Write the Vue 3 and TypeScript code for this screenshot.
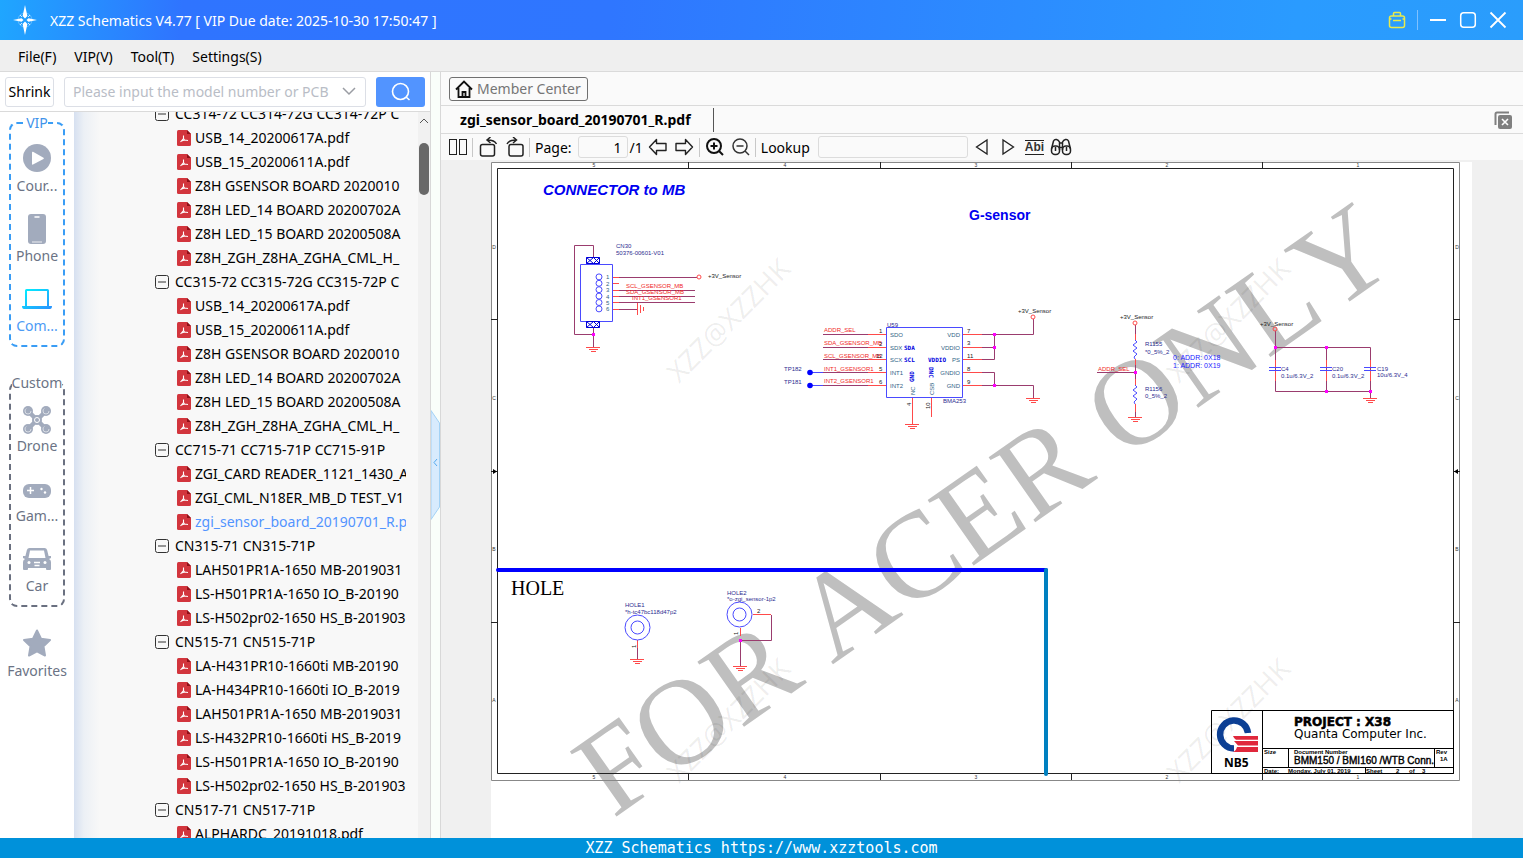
<script setup lang="ts">
import { ref } from 'vue'

interface TreeFolder {
  name: string
  files: string[]
}
interface NavItem {
  label: string
  icon: string
}
interface Label {
  x: number
  y: number
  t: string
}

const menus: string[] = ['File(F)', 'VIP(V)', 'Tool(T)', 'Settings(S)']

const acerFiles: string[] = [
  'USB_14_20200617A.pdf',
  'USB_15_20200611A.pdf',
  'Z8H GSENSOR BOARD 2020010',
  'Z8H LED_14 BOARD 20200702A',
  'Z8H LED_15 BOARD 20200508A',
  'Z8H_ZGH_Z8HA_ZGHA_CML_H_',
]
const folders: TreeFolder[] = [
  { name: 'CC314-72 CC314-72G CC314-72P C', files: acerFiles },
  { name: 'CC315-72 CC315-72G CC315-72P C', files: acerFiles },
  {
    name: 'CC715-71 CC715-71P CC715-91P',
    files: ['ZGI_CARD READER_1121_1430_A', 'ZGI_CML_N18ER_MB_D TEST_V1', 'zgi_sensor_board_20190701_R.p'],
  },
  {
    name: 'CN315-71 CN315-71P',
    files: ['LAH501PR1A-1650 MB-2019031', 'LS-H501PR1A-1650 IO_B-20190', 'LS-H502pr02-1650 HS_B-201903'],
  },
  {
    name: 'CN515-71 CN515-71P',
    files: [
      'LA-H431PR10-1660ti MB-20190',
      'LA-H434PR10-1660ti IO_B-2019',
      'LAH501PR1A-1650 MB-2019031',
      'LS-H432PR10-1660ti HS_B-2019',
      'LS-H501PR1A-1650 IO_B-20190',
      'LS-H502pr02-1650 HS_B-201903',
    ],
  },
  { name: 'CN517-71 CN517-71P', files: ['ALPHARDC_20191018.pdf'] },
]
const selected = ref<string>('zgi_sensor_board_20190701_R.p')

const vipItems: NavItem[] = [
  { label: 'Cour...', icon: 'play' },
  { label: 'Phone', icon: 'phone' },
  { label: 'Com...', icon: 'laptop' },
]
const customItems: NavItem[] = [
  { label: 'Drone', icon: 'drone' },
  { label: 'Gam...', icon: 'game' },
  { label: 'Car', icon: 'car' },
]
const page = ref<string>('1')
const lookup = ref<string>('')
const query = ref<string>('')

const columns = [5, 4, 3, 2, 1].map((n, i) => ({ n, x: 594 + i * 191 }))
const ticksX: number[] = [688, 880, 1071, 1262]
const rowsY = ['D', 'C', 'B', 'A'].map((n, i) => ({ n, y: 249 + i * 151 }))
const marks: number[][] = [[679, 384], [1179, 384], [679, 784], [1179, 784]]

const navy: Label[] = [
  { x: 616, y: 248, t: 'CN30' },
  { x: 616, y: 255, t: '50376-00601-V01' },
  { x: 887, y: 327, t: 'U59' },
  { x: 943, y: 403, t: 'BMA253' },
  { x: 784, y: 371, t: 'TP182' },
  { x: 784, y: 384, t: 'TP181' },
  { x: 1145, y: 346, t: 'R1155' },
  { x: 1145, y: 354, t: '*0_5%_2' },
  { x: 1145, y: 391, t: 'R1156' },
  { x: 1145, y: 398, t: '0_5%_2' },
  { x: 1281, y: 371, t: 'C4' },
  { x: 1281, y: 378, t: '0.1u/6.3V_2' },
  { x: 1332, y: 371, t: 'C20' },
  { x: 1332, y: 378, t: '0.1u/6.3V_2' },
  { x: 1377, y: 371, t: 'C19' },
  { x: 1377, y: 377, t: '10u/6.3V_4' },
  { x: 625, y: 607, t: 'HOLE1' },
  { x: 625, y: 614, t: '*h-tc47bc118d47p2' },
  { x: 727, y: 595, t: 'HOLE2' },
  { x: 727, y: 601, t: '*o-zgi_sensor-1p2' },
]
const red: Label[] = [
  { x: 626, y: 288, t: 'SCL_GSENSOR_MB' },
  { x: 626, y: 294, t: 'SDA_GSENSOR_MB' },
  { x: 632, y: 300, t: 'INT1_GSENSOR1' },
  { x: 824, y: 332, t: 'ADDR_SEL' },
  { x: 824, y: 345, t: 'SDA_GSENSOR_MB' },
  { x: 824, y: 358, t: 'SCL_GSENSOR_MB' },
  { x: 824, y: 371, t: 'INT1_GSENSOR1' },
  { x: 824, y: 383, t: 'INT2_GSENSOR1' },
  { x: 1098, y: 371, t: 'ADDR_SEL' },
]
const black: Label[] = [
  { x: 708, y: 278, t: '+3V_Sensor' },
  { x: 1018, y: 313, t: '+3V_Sensor' },
  { x: 1120, y: 319, t: '+3V_Sensor' },
  { x: 1260, y: 326, t: '+3V_Sensor' },
  { x: 879, y: 333, t: '1' },
  { x: 879, y: 346, t: '2' },
  { x: 876, y: 358, t: '12' },
  { x: 879, y: 371, t: '5' },
  { x: 879, y: 384, t: '6' },
  { x: 967, y: 333, t: '7' },
  { x: 967, y: 345, t: '3' },
  { x: 967, y: 358, t: '11' },
  { x: 967, y: 371, t: '8' },
  { x: 967, y: 384, t: '9' },
  { x: 757, y: 613, t: '2' },
]
const pinsLeft: Label[] = [
  { x: 890, y: 337, t: 'SDO' },
  { x: 890, y: 350, t: 'SDX' },
  { x: 890, y: 362, t: 'SCX' },
  { x: 890, y: 375, t: 'INT1' },
  { x: 890, y: 388, t: 'INT2' },
]
const pinsRight: Label[] = [
  { x: 960, y: 337, t: 'VDD' },
  { x: 960, y: 350, t: 'VDDIO' },
  { x: 960, y: 362, t: 'PS' },
  { x: 960, y: 375, t: 'GNDIO' },
  { x: 960, y: 388, t: 'GND' },
]
const grounds: number[][] = [[593, 347], [912, 424], [1033, 398], [1135, 417], [1370, 398], [637, 659], [740, 666]]
const dots: number[][] = [
  [593, 334], [994, 334], [994, 347], [994, 385], [1135, 372],
  [1275, 347], [1326, 347], [1326, 391], [1370, 391], [740, 640],
]
const capsX: number[] = [1275, 1326, 1370]
const rings: number[][] = [[699, 277], [1033, 317], [1135, 323], [1275, 329]]
</script>

<template>
  <div class="app">
    <header class="titlebar">
      <svg class="star" viewBox="0 0 26 30" width="26" height="30">
        <circle cx="13" cy="15" r="7" fill="none" stroke="#8fd0ff" stroke-width="1" opacity=".6" />
        <path d="M13 0l2.400 11L13 13.500l-2.400-2.500zM13 30l2.400-11L13 16.500l-2.400 2.500zM1 15l8.500-1.800L11.500 15l-2 1.800zM25 15l-8.500-1.800L14.500 15l2 1.800z" fill="#fff" />
        <path d="M8 10l2 2M18 10l-2 2M8 20l2-2M18 20l-2-2" stroke="#cfeaff" stroke-width="1" />
      </svg>
      <h1>XZZ Schematics V4.77 [ VIP Due date: 2025-10-30 17:50:47 ]</h1>
      <div class="window-tools">
        <button aria-label="Toolbox" class="wbtn">
          <svg viewBox="0 0 18 18" width="18" height="18" fill="none" stroke="#e8ea4c" stroke-width="1.500">
            <rect x="1.500" y="5" width="15" height="11.500" rx="2" /><path d="M5.500 5V2.500q0-1 1-1h5q1 0 1 1V5M1.500 8h2M14.500 8h2M5 9.500h8" />
          </svg>
        </button>
        <i class="divider"></i>
        <button aria-label="Minimize" class="wbtn"><svg viewBox="0 0 18 18" width="18" height="18"><path d="M1 9h16" stroke="#fff" stroke-width="2" /></svg></button>
        <button aria-label="Maximize" class="wbtn"><svg viewBox="0 0 18 18" width="18" height="18"><rect x="1.700" y="1.700" width="14.600" height="14.600" rx="3" fill="none" stroke="#fff" stroke-width="1.500" /></svg></button>
        <button aria-label="Close" class="wbtn"><svg viewBox="0 0 18 18" width="18" height="18"><path d="M1.500 1.500l15 15M16.500 1.500l-15 15" stroke="#fff" stroke-width="1.800" /></svg></button>
      </div>
    </header>

    <nav class="menubar">
      <button v-for="m in menus" :key="m">{{ m }}</button>
    </nav>

    <div class="body">
      <section class="left">
        <form class="search" @submit.prevent>
          <button type="button" class="shrink">Shrink</button>
          <div class="combo">
            <input v-model="query" aria-label="Model number" placeholder="Please input the model number or PCB" />
            <button type="button" aria-label="History">
              <svg viewBox="0 0 14 9" width="14" height="9"><path d="M1 1l6 6 6-6" fill="none" stroke="#9a9da3" stroke-width="1.500" /></svg>
            </button>
          </div>
          <button class="go" aria-label="Search">
            <svg viewBox="0 0 20 20" width="20" height="20" fill="none" stroke="#fff" stroke-width="1.600"><circle cx="9.500" cy="9.500" r="8" /><path d="M15 15l3.500 3" /></svg>
          </button>
        </form>

        <div class="browse">
          <aside class="side">
            <fieldset class="group vip">
              <legend>VIP</legend>
              <button v-for="it in vipItems" :key="it.label" class="nav" :class="{ active: it.icon === 'laptop' }">
                <svg viewBox="0 0 30 30" width="30" height="30">
                  <template v-if="it.icon === 'play'">
                    <circle cx="15" cy="15" r="14" fill="#a2abbd" /><path d="M10 9.500v11.500q0 1 1 .5l10.500-5.500q.8-.7 0-1.300L11 8.800q-1-.4-1 .7z" fill="#fff" />
                  </template>
                  <template v-else-if="it.icon === 'phone'">
                    <rect x="6" y="1" width="18" height="30" rx="3" fill="#a2abbd" /><path d="M13 4h4" stroke="#fff" stroke-width="1.500" stroke-linecap="round" /><path d="M10 29h10" stroke="#fff" stroke-width=".8" />
                  </template>
                  <template v-else>
                    <defs><linearGradient id="lap" x1="0" x2="1" y1="0" y2="1"><stop offset="0" stop-color="#00f4ff" /><stop offset="1" stop-color="#2a90ff" /></linearGradient></defs>
                    <path fill-rule="evenodd" d="M4.500 6h21q1.500 0 1.500 1.500V23h3q0 3-2 3H2q-2 0-2-3h3V7.500Q3 6 4.500 6zM5 8v15h20V8z" fill="url(#lap)" />
                  </template>
                </svg>
                <span>{{ it.label }}</span>
              </button>
            </fieldset>
            <fieldset class="group custom">
              <legend>Custom</legend>
              <button v-for="it in customItems" :key="it.label" class="nav">
                <svg viewBox="0 0 30 30" width="30" height="30">
                  <template v-if="it.icon === 'drone'">
                    <path d="M6 8l18 18M24 8L6 26" stroke="#a2abbd" stroke-width="4.500" />
                    <circle cx="15" cy="17" r="5" fill="#a2abbd" /><circle cx="15" cy="17" r="2.500" fill="none" stroke="#fff" />
                    <g v-for="p in [[6, 8], [24, 8], [6, 26], [24, 26]]" :key="p.join()">
                      <circle :cx="p[0]" :cy="p[1]" r="5" fill="#a2abbd" />
                      <circle :cx="p[0]" :cy="p[1]" r="3" fill="none" stroke="#e4e8ee" stroke-width=".8" stroke-dasharray="12 7" />
                    </g>
                  </template>
                  <template v-else-if="it.icon === 'game'">
                    <rect x="1" y="11" width="28" height="14" rx="6" fill="#a2abbd" />
                    <path d="M5 17.500h7M8.500 14v7" stroke="#fff" stroke-width="1.500" /><circle cx="19.500" cy="16" r="1.200" fill="#fff" /><circle cx="23" cy="19.500" r="1.200" fill="#fff" />
                  </template>
                  <template v-else>
                    <path fill-rule="evenodd" d="M7.500 5h15q2 0 2.600 2l1.500 6H29v2l-2 1q2 1 2 3v7q0 1-1 1h-3q-1 0-1-1v-1H6v1q0 1-1 1H2q-1 0-1-1v-7q0-2 2-3l-2-1v-2h2.400l1.500-6q.6-2 2.600-2zM8 7.500L6.500 15h17L22 7.500z" fill="#a2abbd" />
                    <path d="M12 19.500h6M12.500 22.500h5" stroke="#fff" stroke-width="1.500" /><circle cx="7" cy="19.500" r="1.500" fill="#fff" /><circle cx="23" cy="19.500" r="1.500" fill="#fff" />
                  </template>
                </svg>
                <span>{{ it.label }}</span>
              </button>
            </fieldset>
            <button class="nav favorites">
              <svg viewBox="0 0 30 30" width="30" height="30"><path d="M15 2.500l4 8.200 9 1.300-6.500 6.300L23 27.500 15 23.300 7 27.500l1.500-9.200L2 12l9-1.300z" fill="#a2abbd" stroke="#a2abbd" stroke-width="2" stroke-linejoin="round" /></svg>
              <span>Favorites</span>
            </button>
          </aside>

          <div class="tree">
            <ul>
              <li v-for="f in folders" :key="f.name">
                <button class="folder">
                  <svg viewBox="0 0 14 14" width="14" height="14" fill="none" stroke="#333"><rect x=".5" y=".5" width="13" height="13" rx="2" /><path d="M3 7h8" /></svg>
                  <span>{{ f.name }}</span>
                </button>
                <ul>
                  <li v-for="n in f.files" :key="n">
                    <button class="file" :class="{ current: n === selected }" @click="selected = n">
                      <svg viewBox="0 0 14 16" width="14" height="16">
                        <path d="M1.500 0H10l4 4v10.500q0 1.500-1.500 1.500h-11Q0 16 0 14.500v-13Q0 0 1.500 0z" fill="#d2353d" /><path d="M10 0l4 4h-4z" fill="#8f1018" />
                        <path d="M6.500 5.500v3L3.500 12M6.500 8.500l1 1.500 3.500.5M4.500 11l3-1" fill="none" stroke="#fff" stroke-width="1.100" />
                      </svg>
                      <span>{{ n }}</span>
                    </button>
                  </li>
                </ul>
              </li>
            </ul>
          </div>
          <div class="scroll">
            <svg viewBox="0 0 10 6" width="10" height="6"><path d="M1 5l4-4 4 4" fill="none" stroke="#555" /></svg>
            <i class="thumb"></i>
          </div>
        </div>
      </section>

      <div class="splitter">
        <button aria-label="Collapse panel">
          <svg viewBox="0 0 9 110" width="9" height="110"><path d="M0 .5L8.500 13v84L0 109.500z" fill="#d8ebfd" stroke="#a3d2f5" /><path d="M6 49L3 52.500 6 56" fill="none" stroke="#55aaf0" /></svg>
        </button>
      </div>

      <main class="right">
        <div class="member-row">
          <button class="member">
            <svg viewBox="0 0 18 18" width="18" height="18" fill="none" stroke="#111" stroke-width="1.800"><path d="M1 9.500L9 1.500l8 8M3.500 8v9h11V8M7.500 17v-5h3v5" /></svg>
            Member Center
          </button>
        </div>
        <div class="tabs">
          <button class="tab">zgi_sensor_board_20190701_R.pdf</button>
          <button class="close-all" aria-label="Close all tabs">
            <svg viewBox="0 0 18 18" width="18" height="18"><path d="M1.500 14V3q0-1.500 1.500-1.500h12" fill="none" stroke="#808080" stroke-width="2" /><rect x="4" y="4" width="14" height="14" rx="2" fill="#808080" /><path d="M8 8l6 6M14 8l-6 6" stroke="#fff" stroke-width="1.600" /></svg>
          </button>
        </div>
        <div class="toolbar">
          <button aria-label="Two pages"><svg viewBox="0 0 20 18" width="20" height="18" fill="none" stroke="#222"><rect x="1.500" y="1.500" width="7" height="15" /><rect x="11.500" y="1.500" width="7" height="15" /></svg></button>
          <i></i>
          <button aria-label="Rotate left"><svg viewBox="0 0 20 20" width="20" height="20" fill="none" stroke="#222" stroke-width="1.500"><rect x="2.500" y="7.500" width="14" height="11.500" rx="2" /><path d="M18.500 7q-2-4-9-4M12.500 0L9 3l3.500 3" /></svg></button>
          <button aria-label="Rotate right" class="rot"><svg viewBox="0 0 20 20" width="20" height="20" fill="none" stroke="#222" stroke-width="1.500"><rect x="4" y="7.500" width="14" height="11.500" rx="2" /><path d="M2 7q2-4 9-4M8 0l3.500 3L8 6" /></svg></button>
          <i></i>
          <label for="page">Page:</label>
          <input id="page" v-model="page" class="page" />
          <span class="total">/1</span>
          <button aria-label="Previous page"><svg viewBox="0 0 20 18" width="20" height="18" fill="none" stroke="#222" stroke-width="1.400"><path d="M1.500 9l7-7.500V5.500H18v7H8.500v4z" stroke-linejoin="round" /></svg></button>
          <button aria-label="Next page" class="next"><svg viewBox="0 0 20 18" width="20" height="18" fill="none" stroke="#222" stroke-width="1.400"><path d="M18.500 9l-7-7.500V5.500H2v7h9.500v4z" stroke-linejoin="round" /></svg></button>
          <i></i>
          <button aria-label="Zoom in"><svg viewBox="0 0 20 20" width="20" height="20" fill="none" stroke="#111" stroke-width="2"><circle cx="9" cy="9" r="7" /><path d="M14 14l4 4M5.500 9h7M9 5.500v7" /></svg></button>
          <button aria-label="Zoom out" class="out"><svg viewBox="0 0 20 20" width="20" height="20" fill="none" stroke="#333" stroke-width="1.500"><circle cx="9" cy="9" r="7" /><path d="M14 14l4 4M5.500 9h7" /></svg></button>
          <i></i>
          <label for="lookup">Lookup</label>
          <input id="lookup" v-model="lookup" class="lookup" />
          <button aria-label="Find previous"><svg viewBox="0 0 14 18" width="14" height="18" fill="none" stroke="#222" stroke-width="1.300"><path d="M12 2v14L1.500 9z" /></svg></button>
          <button aria-label="Find next" class="fnext"><svg viewBox="0 0 14 18" width="14" height="18" fill="none" stroke="#222" stroke-width="1.300"><path d="M2 2v14L12.500 9z" /></svg></button>
          <button class="abi">Abi</button>
          <button aria-label="Search document"><svg viewBox="0 0 22 18" width="22" height="18" fill="none" stroke="#222" stroke-width="1.500"><rect x="1.500" y="8" width="8" height="8.500" rx="3.500" /><rect x="12.500" y="8" width="8" height="8.500" rx="3.500" /><path d="M1.500 11L3.500 3q1-2 3-1.500T9.500 4v8M20.500 11l-2-8q-1-2-3-1.500T12.500 4v8M9 5h4M9 9.500h4M5.500 9v4M16.500 9v4" /></svg></button>
        </div>

        <div class="viewer">
          <svg class="sheet" viewBox="491 162 981 676" preserveAspectRatio="xMidYMin meet">
            <rect x="491" y="162" width="981" height="676" fill="#fff" />
            <text class="stamp" transform="translate(613 819) rotate(-35.100)">FOR ACER ONLY</text>
            <g class="marks"><text v-for="m in marks" :key="m.join()" :transform="`translate(${m[0]} ${m[1]}) rotate(-45)`">XZZ@XZZHK</text></g>

            <g fill="none" stroke="#222">
              <path d="M491.500 162.500H1459.500V780.500H491.500z" stroke="#888" />
              <path d="M497.500 168.500H1453.500V773.500H497.500z" />
              <path v-for="x in ticksX" :key="x" :d="`M${x}.500 162v6M${x}.500 774v6`" />
              <path v-for="y in [319, 622]" :key="y" :d="`M491 ${y}.500h6M1454 ${y}.500h6`" />
              <path d="M491 471.500h6M1454 471.500h6" />
            </g>
            <path d="M497 471.500l-4-2.500v5zM1454 471.500l4-2.500v5z" fill="#000" />
            <g class="coords">
              <template v-for="c in columns" :key="c.n"><text :x="c.x" y="167">{{ c.n }}</text><text :x="c.x" y="779">{{ c.n }}</text></template>
              <template v-for="r in rowsY" :key="r.n"><text x="494" :y="r.y">{{ r.n }}</text><text x="1457" :y="r.y">{{ r.n }}</text></template>
            </g>

            <text class="heading slant" x="543" y="195">CONNECTOR to MB</text>
            <text class="heading" x="969" y="220">G-sensor</text>

            <!-- Wires -->
            <g fill="none" stroke="#9a3c6e">
              <path d="M593.500 257V245.500H574.500V334.500H593.500M593.500 328V347" />
              <path d="M619 277.500H697M619 290.500H695M619 296.500H695M619 302.500H695M619 309.500H637" />
              <path d="M823 334.500H868M823 347.500H868M823 359.500H868M823 372.500H868M823 385.500H868" />
              <path d="M982 334.500H1033.500V319M982 347.500H994M982 359.500H994.500V334M982 372.500H994.500V385M982 385.500H1033.500V398" />
              <path d="M1097 372.500H1135M1135.500 325V334M1135.500 365V380M1135.500 410V417" />
              <path d="M1275.500 331V391.500H1370.500V347.500H1275M1326.500 347V391M1370.500 391V398" />
              <path d="M637.500 648V659M740.500 640V666M740 640.500H771.500V615" />
            </g>
            <g fill="none" stroke="#ff4a4a">
              <path d="M612 277.500h7M612 283.500h7M612 290.500h7M612 296.500h7M612 302.500h7M612 309.500h7" />
              <path d="M868 334.500h18M868 347.500h18M868 359.500h18M868 372.500h18M868 385.500h18M963 334.500h19M963 347.500h19M963 359.500h19M963 372.500h19M963 385.500h19" />
              <path d="M912.500 398V424M931.500 398V417M1135.500 334v6M1135.500 359v6M1135.500 379v6M1135.500 404v8" />
              <path v-for="x in capsX" :key="x" :d="`M${x}.500 360v7M${x}.500 371v10`" />
              <path d="M637.500 640v8M740.500 628v8M753 614.500h18M637.500 303v12M640.500 305v8M643.500 307v4" />
              <path v-for="g in grounds" :key="g.join()" :d="`M${g[0] - 7} ${g[1]}.500h14M${g[0] - 4} ${g[1] + 2}.500h9M${g[0] - 2} ${g[1] + 4}.500h5`" />
              <circle v-for="r in rings" :key="r.join()" :cx="r[0]" :cy="r[1]" r="2" />
            </g>

            <!-- Component outlines -->
            <g fill="none" stroke="#4a4aff">
              <path d="M580.500 264.500H612.500V321.500H580.500zM886.500 327.500H962.500V397.500H886.500z" />
              <path d="M586.500 257.500h13v6h-13zM586.500 257.500l7 6 6-6M586.500 263.500l7-6 6 6M586.500 321.500h13v6h-13zM586.500 321.500l7 6 6-6M586.500 327.500l7-6 6 6" stroke="#0000d8" />
              <circle v-for="i in 6" :key="i" cx="599" :cy="270.500 + i * 6.400" r="3" />
              <path d="M1135 340l2 2-4 3 4 3-4 3 4 3-3 3 1 2M1135 385l2 2-4 3 4 3-4 3 4 3-3 3 1 2" />
              <path v-for="x in capsX" :key="x" :d="`M${x - 6} 367.500h12M${x - 6} 370.500h12`" />
              <path d="M810 372.500h13M810 385.500h13" />
              <circle cx="637.500" cy="627.500" r="12.500" /><circle cx="637.500" cy="627.500" r="6.500" />
              <circle cx="739.500" cy="614.500" r="12.500" /><circle cx="739.500" cy="614.500" r="6.500" />
            </g>
            <circle cx="810" cy="372.500" r="2.800" fill="#00f" /><circle cx="810" cy="385.500" r="2.800" fill="#00f" />
            <rect v-for="d in dots" :key="d.join()" :x="d[0] - 1" :y="d[1] - 1" width="3" height="3" fill="#f0f" />

            <!-- Component labels -->
            <g class="tiny">
              <g fill="#2c2c90"><text v-for="l in navy" :key="l.x + l.t" :x="l.x" :y="l.y">{{ l.t }}</text></g>
              <g fill="#f02828"><text v-for="l in red" :key="l.x + l.t" :x="l.x" :y="l.y">{{ l.t }}</text></g>
              <g fill="#222"><text v-for="l in black" :key="l.x + l.t + l.y" :x="l.x" :y="l.y">{{ l.t }}</text></g>
              <g fill="#2f5f86">
                <text v-for="l in pinsLeft" :key="l.t" :x="l.x" :y="l.y">{{ l.t }}</text>
                <text v-for="l in pinsRight" :key="l.t" :x="l.x" :y="l.y" text-anchor="end">{{ l.t }}</text>
                <text v-for="i in 6" :key="i" x="606" :y="273 + i * 6.400">{{ i }}</text>
                <text transform="translate(915 395) rotate(-90)">NC</text>
                <text transform="translate(934 395) rotate(-90)">CSB</text>
              </g>
              <g fill="#222">
                <text transform="translate(911 406) rotate(-90)">4</text><text transform="translate(930 409) rotate(-90)">10</text>
                <text transform="translate(636 648) rotate(-90)">1</text><text transform="translate(738 635) rotate(-90)">1</text>
              </g>
            </g>
            <g class="alias">
              <text x="904" y="350">SDA</text><text x="904" y="362">SCL</text><text x="928" y="362">VDDIO</text>
              <text transform="translate(914 382) rotate(-90)">GND</text><text transform="translate(929 367) rotate(90)">DNC</text>
            </g>
            <g class="addr"><text x="1173" y="360">0: ADDR: 0X18</text><text x="1173" y="368">1: ADDR: 0X19</text></g>

            <path d="M498 570H1046" stroke="#00f" stroke-width="4" stroke-linecap="round" />
            <path d="M1046 570V774" stroke="#0080c0" stroke-width="4" stroke-linecap="round" />
            <text class="hole" x="511" y="595">HOLE</text>

            <!-- Title block -->
            <path d="M1211.500 710.500H1453.500V773.500H1211.500zM1262.500 710V773M1262 748.500H1453M1262 767.500H1453M1288.500 748V768M1434.500 748V768M1365.500 768V773" fill="none" stroke="#000" />
            <path d="M1248 733a14 14 0 1 0-14 15.500" fill="none" stroke="#0c3f94" stroke-width="6.500" />
            <path d="M1233 736h25v3.800h-22q-2-1-3-3.800zM1234 741h24v4.500h-20zM1233 752q3-1 4-5h21v5z" fill="#e0283c" />
            <text class="nb5" x="1224" y="767">NB5</text>
            <text class="project" x="1294" y="726">PROJECT : X38</text>
            <text class="company" x="1294" y="738">Quanta Computer Inc.</text>
            <text class="board" x="1294" y="764">BMM150 / BMI160 /WTB Conn.</text>
            <g class="block-notes">
              <text x="1264" y="754">Size</text><text x="1294" y="754">Document Number</text><text x="1436" y="754">Rev</text><text x="1440" y="761">1A</text>
              <text x="1264" y="773">Date:</text><text x="1288" y="773">Monday, July 01, 2019</text><text x="1366" y="773">Sheet</text><text x="1396" y="773">2</text><text x="1409" y="773">of</text><text x="1422" y="773">3</text>
            </g>
          </svg>
        </div>
      </main>
    </div>

    <footer class="status">XZZ Schematics https://www.xzztools.com</footer>
  </div>
</template>

<style>
body {
  margin: 0;
}
</style>

<style scoped>
.app {
  display: flex;
  flex-direction: column;
  height: 100vh;
  overflow: hidden;
  background: #fafafa;
  color: #000;
  font: 14px/20px "Noto Sans", "Open Sans", sans-serif;
}
button {
  margin: 0;
  padding: 0;
  border: 0;
  background: none;
  color: inherit;
  font: inherit;
  white-space: nowrap;
}
input {
  box-sizing: border-box;
  min-width: 0;
  font: inherit;
}
svg {
  display: block;
  flex: none;
}
.titlebar {
  display: flex;
  align-items: center;
  flex: none;
  height: 40px;
  padding: 0 16px 0 12px;
  background: linear-gradient(95deg, #1fa6ff 0, #2f74ff 12%, #2f76ff 40%, #2a9bff 85%, #2a9dfc 100%);
  color: #fff;
}
.titlebar h1 {
  flex: 1;
  margin: 0 0 0 12px;
  padding-top: 1px;
  font-size: 14px;
  font-weight: 400;
}
.window-tools {
  display: flex;
  align-items: center;
  gap: 12px;
}
.window-tools .divider {
  width: 1px;
  height: 20px;
  margin: 0 -1px;
  background: #7fc1ff;
}
.menubar {
  display: flex;
  gap: 18px;
  box-sizing: border-box;
  flex: none;
  height: 32px;
  padding: 2px 18px 0;
  border-bottom: 1px solid #dadada;
  background: #efefef;
}
.body {
  display: flex;
  flex: 1;
  min-height: 0;
}
.left {
  display: flex;
  flex-direction: column;
  flex: none;
  width: 430px;
  border-right: 1px solid #d8d8d8;
  background: #fff;
}
.search {
  display: flex;
  align-items: center;
  flex: none;
  height: 39px;
  padding: 0 5px;
  border-bottom: 1px solid #dadada;
}
.search .shrink {
  box-sizing: border-box;
  width: 49px;
  height: 30px;
  padding-top: 1px;
  border: 1px solid #dcdfe6;
  border-radius: 3px;
}
.combo {
  display: flex;
  align-items: center;
  box-sizing: border-box;
  flex: 1;
  height: 30px;
  margin: 0 10px;
  padding: 0 9px 0 8px;
  border: 1px solid #dcdfe6;
  border-radius: 3px;
}
.combo input {
  flex: 1;
  padding: 1px 0 0;
  border: 0;
  outline: 0;
  background: none;
}
.combo input::placeholder {
  color: #b9bdc6;
}
.go {
  display: grid;
  place-items: center;
  width: 49px;
  height: 30px;
  border-radius: 3px;
  background: #5294ff;
}
.browse {
  display: flex;
  flex: 1;
  min-height: 0;
}
.side {
  box-sizing: border-box;
  flex: none;
  width: 74px;
  padding: 1px 9px 0;
  background: #fff;
}
.group {
  min-width: 0;
  margin: 0 0 26px;
  padding: 10px 0 9px;
  border: 2px dashed #3a9df5;
  border-radius: 8px;
}
.group legend {
  margin: 0 auto;
  padding: 0;
  color: #3f93ea;
}
.group.custom {
  margin-bottom: 21px;
  border-color: #6a7080;
}
.group.custom legend {
  color: #6b7385;
}
.nav {
  display: flex;
  flex-direction: column;
  align-items: center;
  gap: 3px;
  width: 100%;
  color: #6b7385;
}
.nav svg {
  overflow: visible;
}
.nav + .nav {
  margin-top: 17px;
}
.nav.active {
  color: #4d9bf5;
}
.tree {
  flex: 1;
  min-width: 0;
  padding: 0 12px 0 81px;
  overflow: hidden;
  background: linear-gradient(90deg, #d6e0f0 0, #ecf0f5 10px, #f8f8f8 26px);
}
.tree ul {
  margin: 0;
  padding: 0;
  list-style: none;
}
.tree > ul {
  margin-top: -10px;
}
.tree li ul {
  padding-left: 22px;
}
.folder,
.file {
  display: flex;
  align-items: center;
  width: 100%;
  height: 24px;
  overflow: hidden;
}
.folder {
  gap: 6px;
}
.file {
  gap: 4px;
}
.current {
  color: #5294ff;
}
.scroll {
  display: flex;
  flex-direction: column;
  align-items: center;
  flex: none;
  width: 12px;
  padding-top: 6px;
  background: #f1f1f1;
}
.thumb {
  width: 10px;
  height: 52px;
  margin-top: 19px;
  border-radius: 5px;
  background: #686868;
}
.splitter {
  display: flex;
  align-items: center;
  flex: none;
  width: 9px;
  padding-top: 20px;
  background: #f9fefa;
}
.right {
  display: flex;
  flex-direction: column;
  flex: 1;
  min-width: 0;
  border-left: 1px solid #d8d8d8;
}
.member-row {
  display: flex;
  align-items: center;
  flex: none;
  height: 33px;
  padding: 0 8px;
  border-bottom: 1px solid #dadada;
}
.member {
  display: flex;
  align-items: center;
  gap: 4px;
  box-sizing: border-box;
  height: 24px;
  padding: 0 6px 0 5px;
  border: 1px solid #707070;
  border-radius: 3px;
  color: #757575;
}
.tabs {
  display: flex;
  align-items: center;
  justify-content: space-between;
  flex: none;
  height: 27px;
  padding: 0 11px 0 19px;
  border-bottom: 1px solid #dadada;
}
.tab {
  height: 24px;
  padding-right: 22px;
  border-right: 1px solid #555;
  font-weight: 700;
}
.toolbar {
  display: flex;
  align-items: center;
  flex: none;
  height: 26px;
  padding-left: 7px;
}
.toolbar i {
  width: 1px;
  height: 19px;
  margin: 0 5px 0 4px;
  background: #c8c8c8;
}
.toolbar .rot {
  margin-left: 7px;
}
.toolbar label {
  padding-top: 1px;
  margin-right: 6px;
}
.toolbar input {
  height: 22px;
  padding: 0 5px;
  border: 1px solid #dcdcdc;
  border-radius: 3px;
  outline: 0;
  background: #fafafa;
}
.toolbar .page {
  width: 50px;
  margin-right: 2px;
  text-align: right;
}
.toolbar .total {
  padding-top: 1px;
  margin-right: 5px;
}
.toolbar .next {
  margin: 0 1px 0 6px;
}
.toolbar .out {
  margin-left: 6px;
}
.toolbar .lookup {
  width: 150px;
  margin: 0 7px 0 2px;
}
.toolbar .fnext {
  margin-left: 12px;
}
.toolbar .abi {
  height: 15px;
  margin: 0 6px 0 10px;
  border-top: 1px solid #222;
  border-bottom: 1px solid #222;
  color: #333;
  font: bold 12px/12px "Liberation Sans", sans-serif;
}
.viewer {
  flex: 1;
  min-height: 0;
  padding: 2px 51px 0 50px;
  overflow: hidden;
  background: #f0f0f0;
}
.sheet {
  width: 100%;
  font-family: "Liberation Sans", sans-serif;
}
.stamp {
  fill: #bfbfbf;
  font: 122px "Liberation Serif", serif;
  font-kerning: none;
}
.marks {
  fill: #000;
  fill-opacity: 0.07;
  font: 28px "Noto Sans", sans-serif;
}
.coords {
  fill: #333;
  font-size: 5px;
  text-anchor: middle;
}
.heading {
  fill: #0000f0;
  font-size: 14px;
  font-weight: 700;
}
.slant {
  font-size: 15px;
  font-style: italic;
}
.tiny {
  font-size: 6px;
}
.alias {
  fill: #0000e0;
  font: bold 6px "DejaVu Sans Mono", monospace;
}
.addr {
  fill: #2020ff;
  font-size: 7px;
}
.hole {
  font: 20px "Liberation Serif", serif;
}
.nb5 {
  font: bold 12px "Noto Sans", sans-serif;
}
.project {
  stroke: #000;
  stroke-width: 0.5px;
  font: bold 12px "DejaVu Sans", sans-serif;
}
.company {
  font: 12px "DejaVu Sans", sans-serif;
}
.board {
  stroke: #000;
  stroke-width: 0.4px;
  font-size: 10px;
}
.block-notes {
  font-size: 6px;
  font-weight: 700;
}
.status {
  flex: none;
  height: 20px;
  background: #0091da;
  color: #fff;
  font: 15px/20px "DejaVu Sans Mono", monospace;
  text-align: center;
}
</style>
